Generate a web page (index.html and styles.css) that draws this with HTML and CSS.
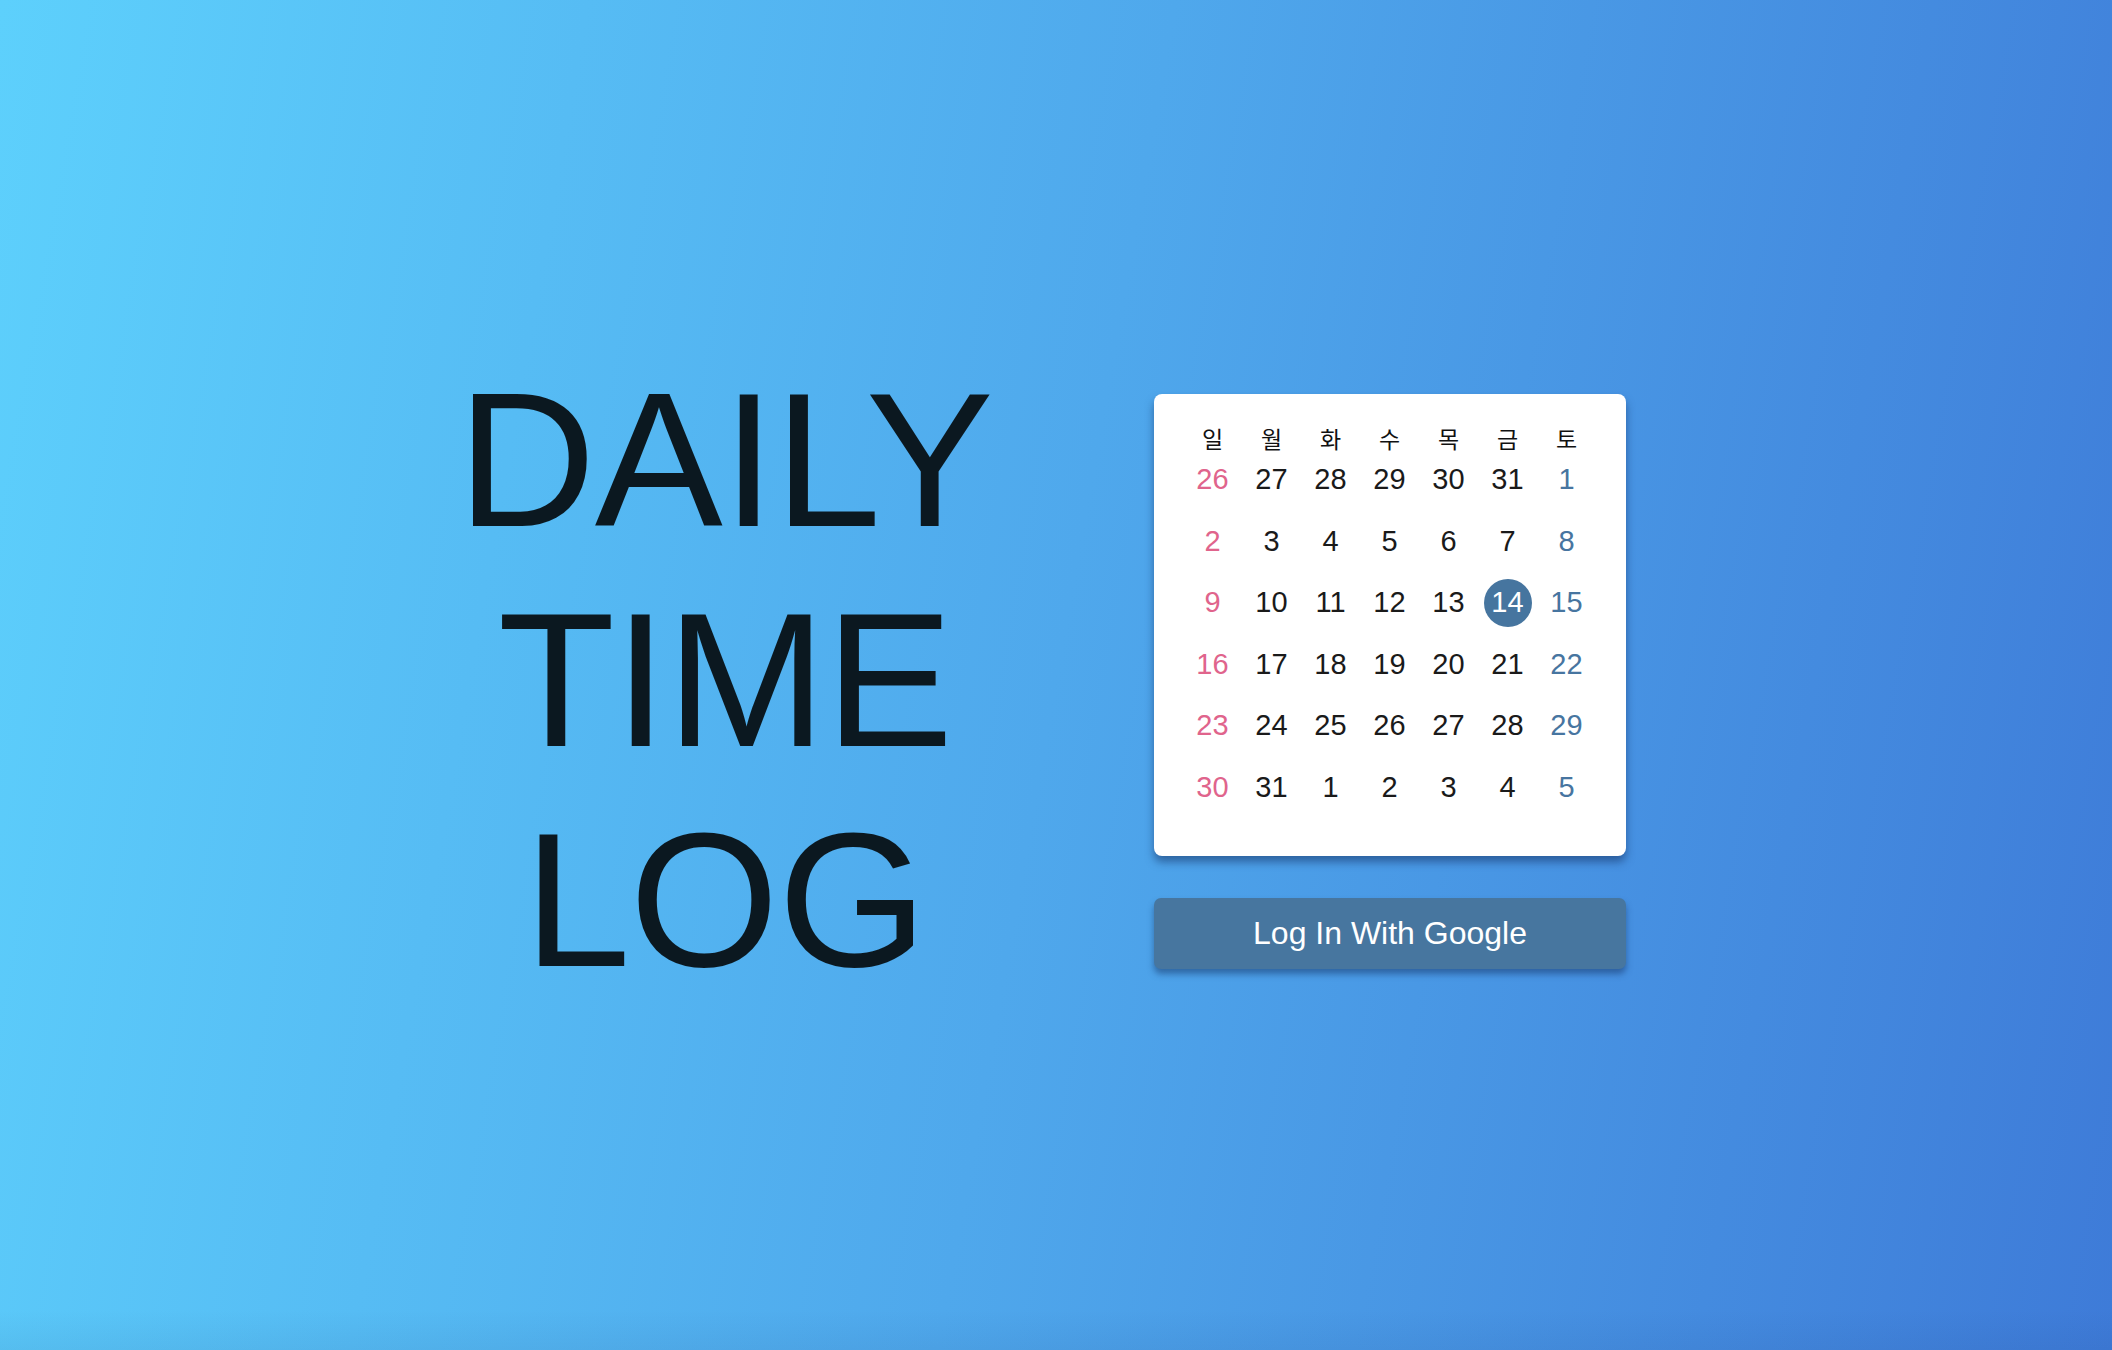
FILE: index.html
```html
<!DOCTYPE html>
<html lang="ko">
<head>
<meta charset="utf-8">
<title>Daily Time Log</title>
<link rel="stylesheet" href="styles.css">
</head>
<body>
<main class="page">
  <h1 class="title">DAILY<br>TIME<br>LOG</h1>
  <section class="side">
    <div class="calendar">
      <div class="grid">
        <span class="wd">일</span><span class="wd">월</span><span class="wd">화</span><span class="wd">수</span><span class="wd">목</span><span class="wd">금</span><span class="wd">토</span>
        <span class="day sun">26</span><span class="day">27</span><span class="day">28</span><span class="day">29</span><span class="day">30</span><span class="day">31</span><span class="day sat">1</span>
        <span class="day sun">2</span><span class="day">3</span><span class="day">4</span><span class="day">5</span><span class="day">6</span><span class="day">7</span><span class="day sat">8</span>
        <span class="day sun">9</span><span class="day">10</span><span class="day">11</span><span class="day">12</span><span class="day">13</span><span class="day today"><b>14</b></span><span class="day sat">15</span>
        <span class="day sun">16</span><span class="day">17</span><span class="day">18</span><span class="day">19</span><span class="day">20</span><span class="day">21</span><span class="day sat">22</span>
        <span class="day sun">23</span><span class="day">24</span><span class="day">25</span><span class="day">26</span><span class="day">27</span><span class="day">28</span><span class="day sat">29</span>
        <span class="day sun">30</span><span class="day">31</span><span class="day">1</span><span class="day">2</span><span class="day">3</span><span class="day">4</span><span class="day sat">5</span>
      </div>
    </div>
    <button class="login">Log In With Google</button>
  </section>
</main>
</body>
</html>
```

FILE: styles.css
```css
html, body {
  margin: 0;
  padding: 0;
  height: 100%;
}
body {
  background:
    linear-gradient(to top, rgba(20, 50, 110, 0.07), rgba(20, 50, 110, 0) 40px),
    linear-gradient(100deg, #5dd0fc 0%, #4fa8ec 50%, #3e7bd8 100%);
  font-family: "Liberation Sans", Arial, "Noto Sans CJK KR", sans-serif;
  overflow: hidden;
}
.page {
  display: flex;
  align-items: flex-start;
  padding: 350px 0 0 416px;
  gap: 120px;
}
.title {
  width: 618px;
  margin: 0;
  text-align: center;
  font-size: 192px;
  font-weight: 400;
  line-height: 220px;
  color: #0b1820;
  letter-spacing: -1px;
}
.side {
  margin-top: 44px;
  width: 472px;
  display: flex;
  flex-direction: column;
  gap: 42px;
}
.calendar {
  background: #fff;
  border-radius: 8px;
  box-shadow: 0 6px 8px rgba(20, 50, 100, 0.55);
  height: 462px;
  box-sizing: border-box;
  padding: 33px 0 0 0;
  display: flex;
  justify-content: center;
}
.grid {
  display: grid;
  grid-template-columns: repeat(7, 59px);
  grid-template-rows: 22px repeat(6, 61.5px);
  margin-left: -1px;
}
.wd {
  display: flex;
  align-items: center;
  justify-content: center;
  font-family: "Noto Sans CJK KR", sans-serif;
  font-size: 23px;
  color: #111;
}
.day {
  display: flex;
  align-items: center;
  justify-content: center;
  font-size: 29px;
  color: #1a1a1a;
}
.day.sun { color: #e0648c; }
.day.sat { color: #4775a0; }
.day.today b {
  font-weight: 400;
  width: 48px;
  height: 48px;
  border-radius: 50%;
  background: #46759f;
  color: #fff;
  display: flex;
  align-items: center;
  justify-content: center;
}
.login {
  height: 71px;
  border: none;
  border-radius: 7px;
  background: #47769f;
  color: #fff;
  font-family: "Liberation Sans", Arial, sans-serif;
  font-size: 32px;
  box-shadow: 0 5px 6px rgba(20, 50, 100, 0.5);
  cursor: pointer;
}
```
